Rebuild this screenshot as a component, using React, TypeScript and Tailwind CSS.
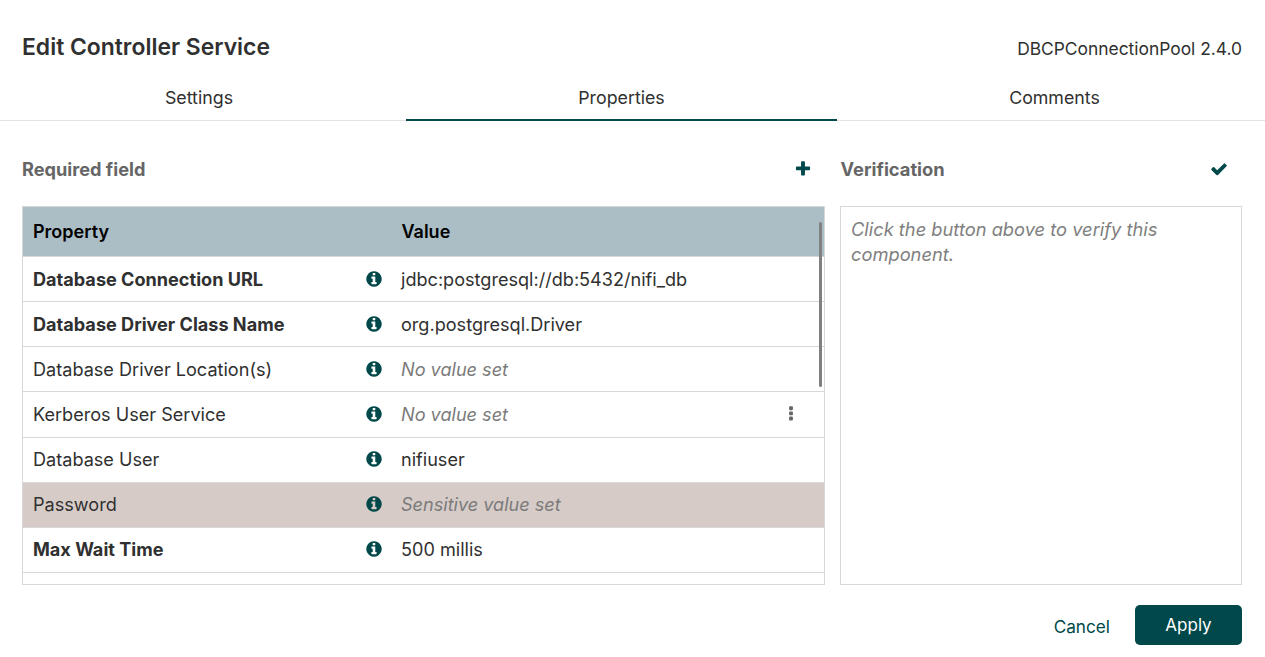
const INFO_PATH =
  "M1152 1376v-160q0-14-9-23t-23-9h-96v-512q0-14-9-23t-23-9h-320q-14 0-23 9t-9 23v160q0 14 9 23t23 9h96v320h-96q-14 0-23 9t-9 23v160q0 14 9 23t23 9h448q14 0 23-9t9-23zm-128-896v-160q0-14-9-23t-23-9h-192q-14 0-23 9t-9 23v160q0 14 9 23t23 9h192q14 0 23-9t9-23zm640 416q0 209-103 385.5t-279.5 279.5-385.5 103-385.5-103-279.5-279.5-103-385.5 103-385.5 279.5-279.5 385.5-103 385.5 103 279.5 279.5 103 385.5z";
const PLUS_PATH =
  "M1600 736v192q0 40-28 68t-68 28h-416v416q0 40-28 68t-68 28h-192q-40 0-68-28t-28-68v-416h-416q-40 0-68-28t-28-68v-192q0-40 28-68t68-28h416v-416q0-40 28-68t68-28h192q40 0 68 28t28 68v416h416q40 0 68 28t28 68z";
const CHECK_PATH =
  "M1671 566q0 40-28 68l-724 724-136 136q-28 28-68 28t-68-28l-136-136-362-362q-28-28-28-68t28-68l136-136q28-28 68-28t68 28l294 295 656-657q28-28 68-28t68 28l136 136q28 28 28 68z";
const ELLIPSIS_PATH =
  "M1088 1248v192q0 40-28 68t-68 28h-192q-40 0-68-28t-28-68v-192q0-40 28-68t68-28h192q40 0 68 28t28 68zm0-512v192q0 40-28 68t-68 28h-192q-40 0-68-28t-28-68v-192q0-40 28-68t68-28h192q40 0 68 28t28 68zm0-512v192q0 40-28 68t-68 28h-192q-40 0-68-28t-28-68v-192q0-40 28-68t68-28h192q40 0 68 28t28 68z";

function Icon({ d, className }: { d: string; className?: string }) {
  return (
    <svg viewBox="0 0 1792 1792" width={18} height={18} fill="currentColor" className={className}>
      <path d={d} />
    </svg>
  );
}

const rows = [
  { name: "Database Connection URL", value: "jdbc:postgresql://db:5432/nifi_db", required: true },
  { name: "Database Driver Class Name", value: "org.postgresql.Driver", required: true },
  { name: "Database Driver Location(s)", value: "No value set" },
  { name: "Kerberos User Service", value: "No value set", menu: true },
  { name: "Database User", value: "nifiuser" },
  { name: "Password", value: "Sensitive value set", selected: true },
  { name: "Max Wait Time", value: "500 millis", required: true },
];

function Row({ row }: { row: (typeof rows)[number] }) {
  const empty = row.value === "No value set" || row.value === "Sensitive value set";
  return (
    <div className={`flex h-[45.15px] items-center border-b border-[#d8d8d8] text-[18.1px] ${row.selected ? "bg-[#d6cbc7]" : ""}`}>
      <div className={`w-[342px] pl-[10px] text-[#303030] ${row.required ? "font-bold" : ""}`}>{row.name}</div>
      <Icon d={INFO_PATH} className="-mt-[1px] text-[#004849]" />
      <div className={`ml-[18px] flex-1 ${empty ? "text-[#7b7b7b] italic" : "text-[#303030]"}`}>{row.value}</div>
      {row.menu && <Icon d={ELLIPSIS_PATH} className="mr-[24px] text-[#666666]" />}
    </div>
  );
}

export default function App() {
  return (
    <div className="flex h-[657px] w-[1265px] flex-col overflow-hidden bg-white font-['Inter',sans-serif] text-[18px] leading-[25px] text-[#303030]">
      <div className="flex items-start justify-between pr-[23px] pl-[22px] pt-[32px]">
        <h1 className="text-[22.9px] leading-[30px] font-semibold">Edit Controller Service</h1>
        <span className="pt-[4px] text-[17.4px]">DBCPConnectionPool 2.4.0</span>
      </div>

      <div className="mt-[15px] flex h-[44px] border-b border-[#e3e3e3] pb-[2px] text-[17.8px]">
        <div className="flex w-[398px] items-center justify-center">Settings</div>
        <div className="ml-[8px] -mb-[3px] flex w-[431px] items-center justify-center border-b-2 border-[#004849] pb-[2px]">Properties</div>
        <div className="ml-[7px] flex flex-1 items-center justify-center">Comments</div>
      </div>

      <div className="flex gap-[15px] pr-[23px] pl-[22px] pt-[36px]">
        <div className="w-[803px]">
          <div className="flex h-[24px] items-center justify-between pr-[13px]">
            <span className="text-[18.2px] font-bold text-[#666666]">Required field</span>
            <Icon d={PLUS_PATH} className="text-[#004849]" />
          </div>
          <div className="relative mt-[25px] h-[379px] overflow-hidden border border-[#d8d8d8]">
            <div className="flex h-[50px] items-center border-b border-[#d8d8d8] bg-[#abbdc5] font-semibold text-black">
              <div className="w-[378.5px] pl-[10px]">Property</div>
              <div>Value</div>
            </div>
            {rows.map((row) => (
              <Row key={row.name} row={row} />
            ))}
            <div className="absolute top-[15px] right-[2px] h-[165px] w-[3px] rounded-full bg-[#808080]" />
          </div>
        </div>

        <div className="flex-1">
          <div className="flex h-[24px] items-center justify-between pr-[14px]">
            <span className="pl-[0.5px] text-[18.3px] font-bold text-[#666666]">Verification</span>
            <Icon d={CHECK_PATH} className="text-[#004849]" />
          </div>
          <div className="mt-[25px] h-[379px] border border-[#d8d8d8] px-[10px] py-[10px] text-[18.3px] text-[#808080] italic">
            Click the button above to verify this component.
          </div>
        </div>
      </div>

      <div className="flex items-center justify-end gap-[25px] px-[23px] pt-[20px] text-[17.2px]">
        <span className="pt-[2px] text-[#004849]">Cancel</span>
        <button className="h-[40px] w-[107px] rounded-[5px] bg-[#004849] pt-[1px] text-[17px] text-white">Apply</button>
      </div>
    </div>
  );
}
